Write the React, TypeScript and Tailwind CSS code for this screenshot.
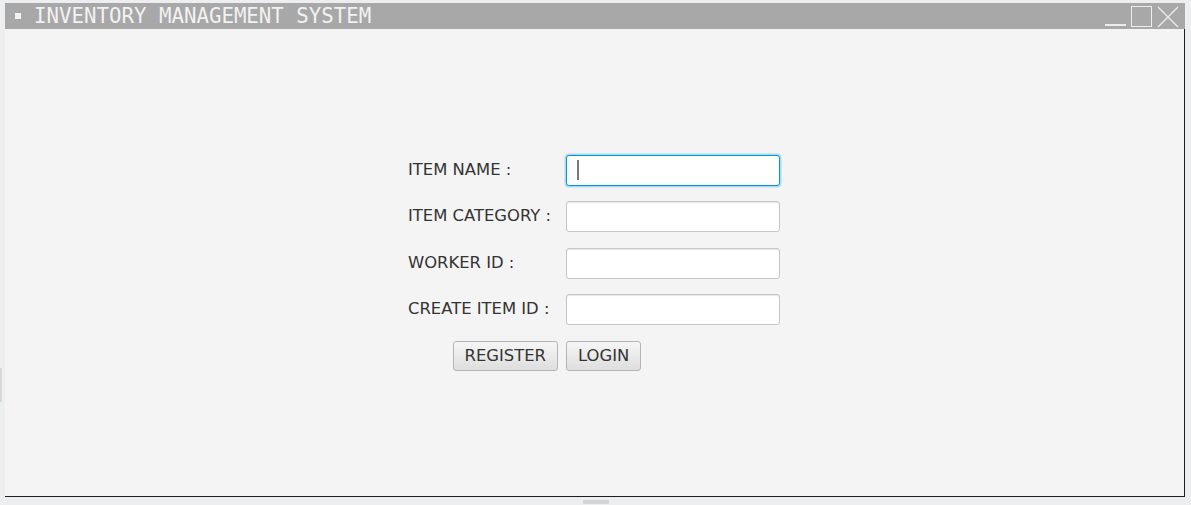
import { useState } from 'react';

const fields = ['ITEM NAME :', 'ITEM CATEGORY :', 'WORKER ID :', 'CREATE ITEM ID :'];

function TitleBar() {
  return (
    <div className="h-[26px] bg-[#a8a8a8] flex items-center relative">
      <div className="w-[6px] h-[6px] bg-[#f2f2f2] ml-[10px]" />
      <span
        className="ml-[13px] text-[20.75px] leading-none text-[#f2f2f2] mt-[1px]"
        style={{ fontFamily: '"DejaVu Sans Mono", monospace' }}
      >
        INVENTORY MANAGEMENT SYSTEM
      </span>
      {/* window buttons */}
      <div className="ml-auto flex items-end gap-[5px] mr-[6px] h-full pt-[2px] pb-[2px]">
        <div className="w-[21px] h-[2px] bg-[#ececec] mb-[1px]" />
        <div className="w-[21px] h-[21px] border-[1.5px] border-[#ececec]" />
        <svg width="22" height="22" viewBox="0 0 22 22" className="mb-[-1px]">
          <path d="M1 1 L21 21 M21 1 L1 21" stroke="#ececec" strokeWidth="1.3" />
        </svg>
      </div>
    </div>
  );
}

export default function App() {
  const [values, setValues] = useState<string[]>(['', '', '', '']);

  return (
    <div
      className="w-[1191px] h-[505px] bg-[#eceef0] pt-[3px] pl-[5px] relative overflow-hidden"
      style={{ fontFamily: '"DejaVu Sans", "Noto Sans", sans-serif' }}
    >
      <div className="w-[1180px] h-[494px] flex flex-col">
        <TitleBar />
        <div className="flex-1 bg-[#f4f4f4] border-r-[1.5px] border-b-[1.5px] border-[#1e1e1e] flex items-center justify-center">
          <div className="grid grid-cols-[150px_214px] gap-x-2 gap-y-[15.5px] -ml-[1px]">
            {fields.map((f, i) => (
              <div key={f} className="contents">
                <div className="flex items-center text-[16.4px] text-[#333333] whitespace-nowrap">{f}</div>
                <div className="relative">
                  <input
                    value={values[i]}
                    onChange={(e) => {
                      const next = [...values];
                      next[i] = e.target.value;
                      setValues(next);
                    }}
                    className={
                      i === 0
                        ? 'w-full h-[31px] bg-white rounded-[3px] border border-[#0896d0] shadow-[0_0_0_1.5px_#a9dcf1] outline-none px-2'
                        : 'w-full h-[31px] bg-white rounded-[3px] border border-[#c6c6c6] shadow-[inset_0_1px_1px_#e6e6e6] outline-none px-2'
                    }
                  />
                  {i === 0 && (
                    <div className="absolute left-[11px] top-[5px] w-[2px] h-[20px] bg-[#777777]" />
                  )}
                </div>
              </div>
            ))}
            <div className="flex justify-end">
              <button className="h-[30px] px-[11px] pt-[1px] rounded-[3px] border border-[#b4b4b4] bg-gradient-to-b from-[#f6f6f6] to-[#dedede] text-[16.4px] text-[#333333]">
                REGISTER
              </button>
            </div>
            <div className="flex">
              <button className="h-[30px] px-[11px] pt-[1px] rounded-[3px] border border-[#b4b4b4] bg-gradient-to-b from-[#f6f6f6] to-[#dedede] text-[16.4px] text-[#333333]">
                LOGIN
              </button>
            </div>
          </div>
        </div>
      </div>
      <div className="absolute left-[583px] top-[500px] w-[26px] h-[4px] bg-[#d4d4d4] rounded-[1px]" />
      <div className="absolute left-0 top-[368px] w-[2px] h-[34px] bg-[#d8d8d8]" />
    </div>
  );
}
